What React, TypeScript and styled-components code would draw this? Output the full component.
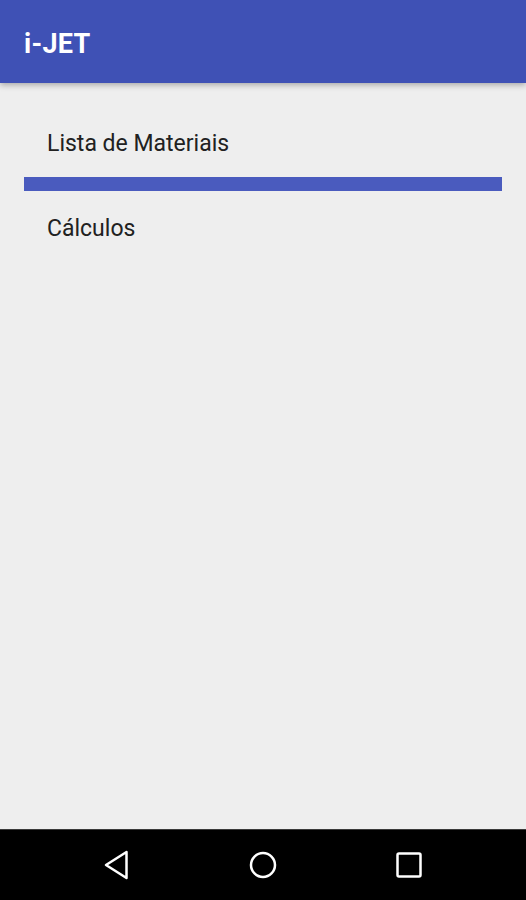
import React from "react";
import styled, { createGlobalStyle } from "styled-components";

const Global = createGlobalStyle`
  html, body { margin: 0; padding: 0; }
  body { background: #eeeeee; font-family: Roboto, "Noto Sans", sans-serif; }
`;

const Screen = styled.div`
  width: 526px;
  height: 900px;
  display: flex;
  flex-direction: column;
  background: #eeeeee;
  overflow: hidden;
`;

const AppBar = styled.header`
  height: 83px;
  flex: none;
  background: #3f51b5;
  display: flex;
  align-items: center;
  padding: 0 24px;
  box-shadow: 0 2px 6px rgba(0, 0, 0, 0.3);
  position: relative;
  z-index: 1;
`;

const Title = styled.h1`
  margin: 0;
  color: #ffffff;
  font-family: Roboto, sans-serif;
  font-weight: 700;
  font-size: 27px;
  letter-spacing: 0.3px;
  padding-top: 4px;
`;

const Content = styled.main`
  flex: 1;
  display: flex;
  flex-direction: column;
  padding: 26px 24px 0;
`;

const Item = styled.div<{ $height: number }>`
  height: ${(p) => p.$height}px;
  display: flex;
  align-items: center;
  padding-left: 23px;
  font-size: 23px;
  color: #212121;
  font-family: Roboto, sans-serif;
`;

const Divider = styled.div`
  height: 14px;
  background: #4a5bbe;
`;

const NavBar = styled.nav`
  height: 70px;
  flex: none;
  background: #000000;
  border-top: 1px solid #3a3a3a;
  display: grid;
  grid-template-columns: repeat(3, 146px);
  justify-content: center;
  align-items: center;
  justify-items: center;
`;

const NavIcon = styled.svg`
  width: 30px;
  height: 30px;
  display: block;
`;

export default function App() {
  return (
    <Screen>
      <Global />
      <AppBar>
        <Title>i-JET</Title>
      </AppBar>
      <Content>
        <Item $height={68}>Lista de Materiais</Item>
        <Divider />
        <Item $height={74}>Cálculos</Item>
      </Content>
      <NavBar>
        <NavIcon viewBox="0 0 30 30">
          <path d="M24.5 2 L24.5 28 L4 15 Z" fill="none" stroke="#fff" strokeWidth="2.5" strokeLinejoin="round" />
        </NavIcon>
        <NavIcon viewBox="0 0 30 30">
          <circle cx="15" cy="15" r="12" fill="none" stroke="#fff" strokeWidth="2.5" />
        </NavIcon>
        <NavIcon viewBox="0 0 30 30">
          <rect x="3.5" y="3.5" width="23" height="23" rx="1.5" fill="none" stroke="#fff" strokeWidth="2.5" />
        </NavIcon>
      </NavBar>
    </Screen>
  );
}
